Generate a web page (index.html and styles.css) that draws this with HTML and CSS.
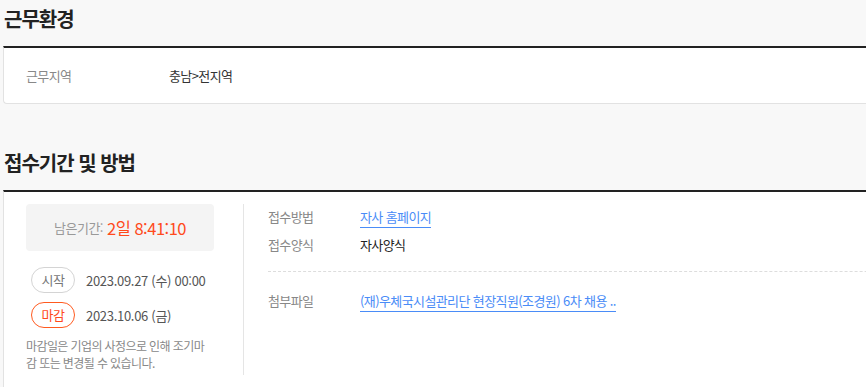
FILE: index.html
```html
<!DOCTYPE html>
<html lang="ko">
<head>
  <meta charset="UTF-8">
  <meta name="viewport" content="width=device-width, initial-scale=1.0">
  <title>근무환경 / 접수기간 및 방법</title>
  <link rel="stylesheet" href="styles.css">
</head>
<body>

<div class="wrap">

  <!-- 근무환경 -->
  <section class="sect">
    <h2 class="sect-title">근무환경</h2>
    <div class="box box-env">
      <dl class="env-row">
        <dt>근무지역</dt>
        <dd>충남&gt;전지역</dd>
      </dl>
    </div>
  </section>

  <!-- 접수기간 및 방법 -->
  <section class="sect sect-apply">
    <h2 class="sect-title">접수기간 및 방법</h2>
    <div class="box box-apply">
      <div class="period">
        <div class="remain">
          <span class="remain-label">남은기간:</span>
          <span class="remain-time">2일 8:41:10</span>
        </div>
        <dl class="dates">
          <div class="date-row">
            <dt class="pill">시작</dt>
            <dd>2023.09.27 (수) 00:00</dd>
          </div>
          <div class="date-row">
            <dt class="pill pill-end">마감</dt>
            <dd>2023.10.06 (금)</dd>
          </div>
        </dl>
        <p class="notice">마감일은 기업의 사정으로 인해 조기마감 또는 변경될 수 있습니다.</p>
      </div>

      <div class="method">
        <dl class="info">
          <div class="info-row">
            <dt>접수방법</dt>
            <dd><a href="#" class="link">자사 홈페이지</a></dd>
          </div>
          <div class="info-row">
            <dt>접수양식</dt>
            <dd>자사양식</dd>
          </div>
        </dl>
        <dl class="info info-file">
          <div class="info-row">
            <dt>첨부파일</dt>
            <dd><a href="#" class="link">(재)우체국시설관리단 현장직원(조경원) 6차 채용 ..</a></dd>
          </div>
        </dl>
      </div>
    </div>
  </section>

</div>

</body>
</html>
```

FILE: styles.css
```css
/* 기본 */
body {
  margin: 0;
  background-color: #f8f8f8;
  font-family: "Noto Sans CJK KR", "Noto Sans", sans-serif;
  color: #333;
  overflow: hidden;
}

dl, dd, p {
  margin: 0;
}

.wrap {
  width: 1000px;
  margin-left: 3px;
}

/* 섹션 제목 */
.sect-title {
  margin: 0;
  padding: 4px 0 0 1px;
  height: 42px;
  font-size: 20px;
  font-weight: 700;
  letter-spacing: -1px;
  color: #222;
  line-height: 30px;
}

.sect-apply {
  margin-top: 40px;
}

.box {
  background-color: #fff;
  border-top: 2px solid #222;
  border-left: 1px solid #e2e2e2;
  border-bottom: 1px solid #e2e2e2;
  border-radius: 0 0 0 4px;
}

/* 근무환경 */
.box-env {
  height: 55px;
  display: flex;
  align-items: center;
  padding: 0 22px;
}

.env-row {
  display: flex;
  font-size: 13px;
  letter-spacing: -0.6px;
}

.env-row dt {
  width: 143px;
  color: #888;
}

.env-row dd {
  color: #333;
}

/* 접수기간 */
.box-apply {
  display: flex;
  align-items: flex-start;
  padding: 12px 0 40px 22px;
  border-bottom: none;
}

.period {
  width: 188px;
  padding-right: 29px;
  padding-bottom: 4px;
  border-right: 1px solid #e5e5e5;
}

.remain {
  height: 47px;
  background-color: #f4f4f4;
  border-radius: 4px;
  display: flex;
  align-items: center;
  justify-content: center;
  gap: 4px;
}

.remain-label {
  font-size: 13px;
  color: #999;
  letter-spacing: -0.5px;
}

.remain-time {
  font-size: 16.5px;
  color: #ff4a1c;
  letter-spacing: -0.5px;
}

.dates {
  margin-top: 16px;
  padding-left: 5px;
}

.date-row {
  display: flex;
  align-items: center;
  height: 26px;
  margin-bottom: 9px;
}

.date-row dd {
  margin-left: 11px;
  font-size: 13px;
  color: #555;
  letter-spacing: -0.3px;
}

.pill {
  box-sizing: border-box;
  width: 44px;
  height: 26px;
  border: 1px solid #d4d4d4;
  border-radius: 13px;
  text-align: center;
  font-size: 13px;
  line-height: 24px;
  color: #777;
  letter-spacing: -0.5px;
}

.pill-end {
  border-color: #ff5a1f;
  color: #ff4a1c;
}

.notice {
  margin-top: 7px;
  font-size: 12px;
  line-height: 17px;
  color: #888;
  letter-spacing: -0.6px;
}

/* 접수방법 */
.method {
  flex: 1;
  padding-left: 24px;
  margin-top: -2px;
}

.info {
  font-size: 13px;
  letter-spacing: -0.6px;
}

.info-row {
  display: flex;
  align-items: center;
  height: 28px;
}

.info-row dt {
  width: 92px;
  color: #888;
}

.info-row dd {
  color: #222;
}

.info-file {
  margin-top: 13px;
  padding-top: 14px;
  border-top: 1px dashed #ddd;
}

.link {
  color: #4a8cf7;
  text-decoration: none;
  border-bottom: 1px solid #4a8cf7;
  padding-bottom: 1px;
}
```
